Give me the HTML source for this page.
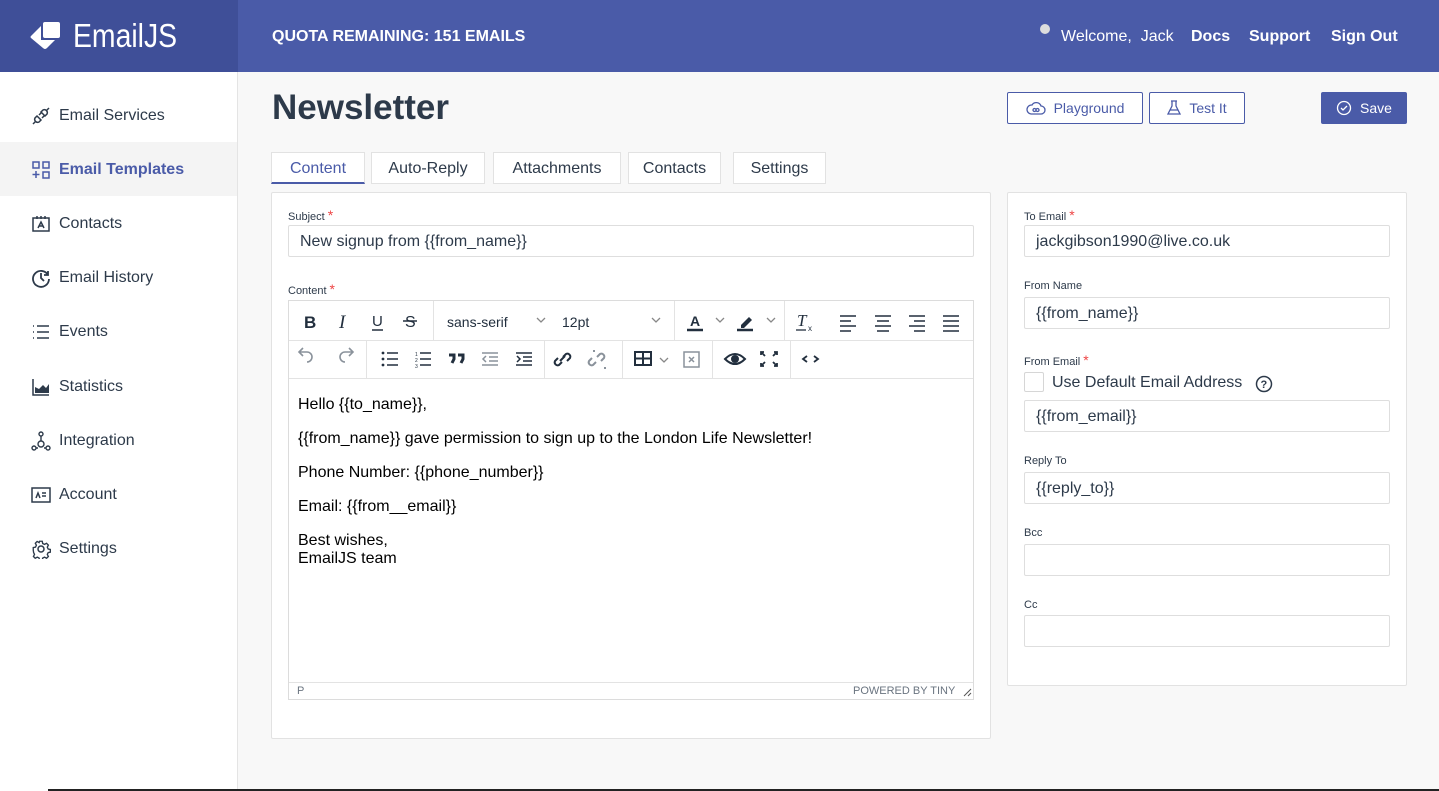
<!DOCTYPE html>
<html><head><meta charset="utf-8"><style>
*{box-sizing:border-box;margin:0;padding:0}
body{width:1439px;height:791px;overflow:hidden;background:#f8f8f8;font-family:"Liberation Sans",sans-serif;color:#2d3a4a;position:relative}
.a{position:absolute}
.hdr{left:0;top:0;width:1439px;height:72px;background:#4a5ba8}
.logo{left:0;top:0;width:238px;height:72px;background:#3f4f98}
.side{left:0;top:72px;width:238px;height:719px;background:#fff;border-right:1px solid #e4e4e4}
.ni{left:0;width:237px;height:54px;display:flex;align-items:center;padding-left:31px;padding-top:2px;font-size:16px;color:#2d3a4a}
.ni svg{width:20px;height:20px;margin-right:8px}
.btn{height:32px;border:1px solid #4a5ba8;border-radius:2px;background:#fff;color:#4a5ba8;font-size:14px;display:flex;align-items:center;justify-content:center;gap:8px}
.tab{top:152px;height:32px;background:#fff;border:1px solid #e2e2e2;font-size:16px;display:flex;align-items:center;justify-content:center;color:#2d3a4a;padding-top:2px}
.card{background:#fff;border:1px solid #e2e2e2;border-radius:2px}
.lbl{font-size:11px;color:#2d3a4a}
.lbl b{color:#e44;font-weight:normal;font-size:14px;margin-left:3px}
.inp{height:32px;border:1px solid #dedede;border-radius:2px;font-size:16px;padding-left:11px;padding-top:2px;display:flex;align-items:center;color:#2d3a4a;background:#fff}
.ed p{font-family:"Liberation Sans",Arial,sans-serif;font-size:16px;color:#000;position:absolute;left:9px}
.sep{position:absolute;top:0;width:1px;background:#e3e3e3}
</style></head><body>
<div class="a hdr"></div>
<div class="a logo"></div>
<svg class="a" style="left:30px;top:20px" width="32" height="32" viewBox="0 0 32 32"><rect x="13" y="2" width="17" height="16" rx="2" fill="#fff"/><path d="M1 16L11 6h0v14h14l-8 8q-2 2-4 0L1 18q-1-1 0-2z" fill="#fff"/></svg>
<div class="a" style="left:73px;top:17px;font-size:33px;color:#fff;transform:scaleX(0.86);transform-origin:left">EmailJS</div>
<div class="a" style="left:272px;top:28px;font-size:16px;font-weight:bold;color:#fff">QUOTA REMAINING: 151 EMAILS</div>
<div class="a" style="left:1040px;top:24px;width:10px;height:10px;border-radius:50%;background:#ddd"></div>
<div class="a" style="left:1061px;top:28px;font-size:16px;color:#fff">Welcome,&nbsp; Jack</div>
<div class="a" style="left:1191px;top:28px;font-size:16px;color:#fff;font-weight:bold">Docs</div>
<div class="a" style="left:1249px;top:28px;font-size:16px;color:#fff;font-weight:bold">Support</div>
<div class="a" style="left:1331px;top:28px;font-size:16px;color:#fff;font-weight:bold">Sign Out</div>

<div class="a side"></div>
<div class="a ni" style="top:88px"><svg viewBox="0 0 20 20" fill="none" stroke="#2d3a4a" stroke-width="1.5"><path d="M2 18l3-3M18 2l-3 3M6 10l4 4-2 2a3 3 0 01-4-4zM10 6l4 4 2-2a3 3 0 00-4-4zM8 9l2-2M11 12l2-2"/></svg>Email Services</div>
<div class="a ni" style="top:142px;background:#f4f4f4;color:#4a5ba8;font-weight:bold"><svg viewBox="0 0 20 20" fill="none" stroke="#4a5ba8" stroke-width="1.5"><rect x="2" y="2" width="6" height="6"/><rect x="12" y="2" width="6" height="6"/><rect x="12" y="12" width="6" height="6"/><path d="M5 11v7M1.5 14.5h7"/></svg>Email Templates</div>
<div class="a ni" style="top:196px"><svg viewBox="0 0 20 20" fill="none" stroke="#2d3a4a" stroke-width="1.5"><rect x="2" y="4" width="16" height="13"/><path d="M6 2v3M10 2v3M14 2v3M7 14l3-6 3 6M8 12h4"/></svg>Contacts</div>
<div class="a ni" style="top:250px"><svg viewBox="0 0 20 20" fill="none" stroke="#2d3a4a" stroke-width="1.8"><path d="M17 7A8 8 0 1 0 18 11M17 3v4h-4M10 5v5l3 3"/></svg>Email History</div>
<div class="a ni" style="top:304px"><svg viewBox="0 0 20 20" fill="none" stroke="#2d3a4a" stroke-width="1.5"><path d="M2 4h1M2 10h1M2 16h1M6 4h12M6 10h12M6 16h12"/></svg>Events</div>
<div class="a ni" style="top:359px"><svg viewBox="0 0 20 20"><path d="M2 2v16h16" fill="none" stroke="#2d3a4a" stroke-width="1.5"/><path d="M4 16v-6l4 2 4-4 3 3 3-4v9z" fill="#2d3a4a"/></svg>Statistics</div>
<div class="a ni" style="top:413px"><svg viewBox="0 0 20 20" fill="none" stroke="#2d3a4a" stroke-width="1.4"><circle cx="10" cy="3" r="2"/><circle cx="3" cy="17" r="2"/><circle cx="17" cy="17" r="2"/><circle cx="10" cy="13" r="3"/><path d="M10 5v5M5 17h2M13 17h2"/></svg>Integration</div>
<div class="a ni" style="top:467px"><svg viewBox="0 0 20 20" fill="none" stroke="#2d3a4a" stroke-width="1.5"><rect x="1" y="3" width="18" height="14"/><path d="M5 13l2-5 2 5M11 8h4M11 11h4"/></svg>Account</div>
<div class="a ni" style="top:521px"><svg viewBox="0 0 20 20" fill="none" stroke="#2d3a4a" stroke-width="1.5"><circle cx="10" cy="10" r="3"/><path d="M8.5 1.5h3l.5 2.5 2 1 2.3-1.2 2 2-1.2 2.3 1 2 2.4.5v3l-2.4.5-1 2 1.2 2.3-2 2-2.3-1.2-2 1-.5 2.4h-3l-.5-2.4-2-1-2.3 1.2-2-2 1.2-2.3-1-2L1.5 11.5v-3L4 8l1-2-1.2-2.3 2-2L8 3z" transform="scale(.9) translate(1 1)"/></svg>Settings</div>

<div class="a" style="left:272px;top:88px;font-size:35px;font-weight:bold;color:#2d3a4a">Newsletter</div>
<div class="a btn" style="left:1007px;top:92px;width:136px"><svg width="20" height="16" viewBox="0 0 20 16" fill="none" stroke="#4a5ba8" stroke-width="1.3"><path d="M5 14h10a4 4 0 000-8 5 5 0 00-9-1 4 4 0 00-1 9z"/><path d="M7 10a1.5 1.5 0 103 0 1.5 1.5 0 103 0 1.5 1.5 0 10-3 0 1.5 1.5 0 10-3 0"/></svg>Playground</div>
<div class="a btn" style="left:1149px;top:92px;width:96px"><svg width="14" height="16" viewBox="0 0 14 16" fill="none" stroke="#4a5ba8" stroke-width="1.3"><path d="M4 1h6M5 1v5L1 14h12L9 6V1M3 10h8"/></svg>Test It</div>
<div class="a btn" style="left:1321px;top:92px;width:86px;background:#4a5ba8;color:#fff"><svg width="16" height="16" viewBox="0 0 16 16" fill="none" stroke="#fff" stroke-width="1.3"><circle cx="8" cy="8" r="6.5"/><path d="M5 8l2 2 4-4"/></svg>Save</div>

<div class="a tab" style="left:271px;width:94px;color:#4a5ba8;border-bottom:2px solid #4a5ba8">Content</div>
<div class="a tab" style="left:371px;width:114px">Auto-Reply</div>
<div class="a tab" style="left:493px;width:128px">Attachments</div>
<div class="a tab" style="left:628px;width:93px">Contacts</div>
<div class="a tab" style="left:733px;width:93px">Settings</div>

<div class="a card" style="left:271px;top:192px;width:720px;height:547px"></div>
<div class="a lbl" style="left:288px;top:207px">Subject<b>*</b></div>
<div class="a inp" style="left:288px;top:225px;width:686px">New signup from {{from_name}}</div>
<div class="a lbl" style="left:288px;top:281px">Content<b>*</b></div>

<div class="a ed" style="left:288px;top:300px;width:686px;height:400px;border:1px solid #dcdcdc;background:#fff">
 <div class="a" style="left:0;top:39px;width:684px;height:1px;background:#e3e3e3"></div>
 <div class="a" style="left:0;top:77px;width:684px;height:1px;background:#e3e3e3"></div>
 <div class="sep" style="left:144px;height:39px"></div>
 <div class="sep" style="left:385px;height:39px"></div>
 <div class="sep" style="left:495px;height:39px"></div>
 <div class="sep" style="left:77px;top:40px;height:37px"></div>
 <div class="sep" style="left:255px;top:40px;height:37px"></div>
 <div class="sep" style="left:333px;top:40px;height:37px"></div>
 <div class="sep" style="left:423px;top:40px;height:37px"></div>
 <div class="sep" style="left:501px;top:40px;height:37px"></div>
 <svg class="a" style="left:0;top:0" width="684" height="78" viewBox="0 0 684 78" fill="none" stroke="#222f3e" stroke-width="2">
  <text x="15" y="27" font-family="Liberation Sans" font-weight="bold" font-size="17" fill="#222f3e" stroke="none">B</text>
  <text x="50" y="27" font-family="Liberation Serif" font-style="italic" font-size="19" fill="#222f3e" stroke="none">I</text>
  <text x="83" y="25" font-family="Liberation Sans" font-size="15" fill="#222f3e" stroke="none">U</text><path d="M83 29h11" stroke-width="1.5"/>
  <text x="116" y="26" font-family="Liberation Sans" font-size="16" fill="#222f3e" stroke="none">S</text><path d="M114 20h14" stroke-width="1.5"/>
  <text x="158" y="26" font-family="Liberation Sans" font-size="14" fill="#222f3e" stroke="none">sans-serif</text>
  <path d="M248 17l4 4 4-4M363 17l4 4 4-4M427 17l4 4 4-4M478 17l4 4 4-4M371 57l4 4 4-4" stroke="#888" stroke-width="1.3"/>
  <text x="273" y="26" font-family="Liberation Sans" font-size="14" fill="#222f3e" stroke="none">12pt</text>
  <text x="401" y="25" font-family="Liberation Sans" font-weight="bold" font-size="14" fill="#222f3e" stroke="none">A</text><path d="M398 29h16" stroke-width="2.5"/>
  <path d="M452 24l8-8 3 3-8 8h-3z" fill="#222f3e" stroke="none"/><path d="M448 29h16" stroke-width="2.5"/>
  <text x="508" y="25" font-family="Liberation Serif" font-style="italic" font-size="17" fill="#222f3e" stroke="none">T</text><path d="M507 29h10" stroke-width="1.3"/><text x="519" y="30" font-size="8" fill="#222f3e" stroke="none" font-family="Liberation Sans">x</text>
  <path d="M551 15h16M551 20h11M551 25h16M551 30h11M586 15h16M588 20h12M586 25h16M588 30h12M620 15h16M625 20h11M620 25h16M625 30h11M654 15h16M654 20h16M654 25h16M654 30h16" stroke-width="1.5"/>
  <g stroke="#8a929b" stroke-width="1.6"><path d="M14 55l-4-4 4-4M10 51h8a5 5 0 010 10M60 55l4-4-4-4M64 51h-8a5 5 0 000 10"/></g>
  <path d="M98 52h11M98 58h11M98 64h11M131 52h11M131 58h11M131 64h11" stroke-width="1.6"/>
  <circle cx="94" cy="52" r="1.4" fill="#222f3e" stroke="none"/><circle cx="94" cy="58" r="1.4" fill="#222f3e" stroke="none"/><circle cx="94" cy="64" r="1.4" fill="#222f3e" stroke="none"/>
  <text x="126" y="55" font-size="5" fill="#222f3e" stroke="none">1</text><text x="126" y="61" font-size="5" fill="#222f3e" stroke="none">2</text><text x="126" y="67" font-size="5" fill="#222f3e" stroke="none">3</text>
  <path d="M160 54h5v4l-2 4M169 54h5v4l-2 4" stroke-width="3"/>
  <g stroke="#8a929b" stroke-width="1.5"><path d="M193 52h16M200 56h9M200 60h9M193 64h16M197 55l-3 3 3 3"/></g>
  <path d="M227 52h16M234 56h9M234 60h9M227 64h16M228 55l3 3-3 3" stroke-width="1.5"/>
  <path d="M274 56l3-3a3 3 0 014 4l-3 3M273 61l-3 3a3 3 0 01-4-4l3-3M271 60l5-5" stroke-width="2"/>
  <g stroke="#8a929b" stroke-width="2"><path d="M308 56l3-3a3 3 0 014 4l-3 3M307 61l-3 3a3 3 0 01-4-4l3-3M305 51v-2M316 66v2"/></g>
  <rect x="346" y="51" width="16" height="13" stroke-width="2"/><path d="M346 57.5h16M354 51v13" stroke-width="2"/>
  <rect x="395" y="51" width="15" height="15" stroke="#8a929b" stroke-width="1.5"/><path d="M400 56l5 5M405 56l-5 5" stroke="#8a929b" stroke-width="1.5"/>
  <path d="M436 58q10-10 20 0q-10 10-20 0z" stroke-width="2"/><circle cx="446" cy="58" r="3" fill="#222f3e"/>
  <path d="M472 54v-3h3M485 51h3v3M488 62v3h-3M475 65h-3v-3M473 52l3 3M487 52l-3 3M487 64l-3-3M473 64l3-3" stroke-width="1.8"/>
  <path d="M518 55l-4 3 4 3M525 55l4 3-4 3" stroke-width="1.8"/>
 </svg>
 <p style="top:95px">Hello {{to_name}},</p>
 <p style="top:129px">{{from_name}} gave permission to sign up to the London Life Newsletter!</p>
 <p style="top:163px">Phone Number: {{phone_number}}</p>
 <p style="top:197px">Email: {{from__email}}</p>
 <p style="top:231px;line-height:18px">Best wishes,<br>EmailJS team</p>
 <div class="a" style="left:0;top:381px;width:684px;height:1px;background:#e3e3e3"></div>
 <div class="a" style="left:8px;top:384px;font-size:11px;color:#6a7480">P</div>
 <div class="a" style="left:564px;top:384px;font-size:11px;color:#6a7480">POWERED BY TINY</div>
 <svg class="a" style="left:674px;top:387px" width="9" height="9"><path d="M1 8L8 1M5 8l3-3" stroke="#555" stroke-width="1"/></svg>
</div>

<div class="a card" style="left:1007px;top:192px;width:400px;height:494px"></div>
<div class="a lbl" style="left:1024px;top:207px">To Email<b>*</b></div>
<div class="a inp" style="left:1024px;top:225px;width:366px">jackgibson1990@live.co.uk</div>
<div class="a lbl" style="left:1024px;top:280px">From Name</div>
<div class="a inp" style="left:1024px;top:297px;width:366px">{{from_name}}</div>
<div class="a lbl" style="left:1024px;top:352px">From Email<b>*</b></div>
<div class="a" style="left:1024px;top:372px;width:20px;height:20px;border:1px solid #d6d6d6;background:#fff;border-radius:2px"></div>
<div class="a" style="left:1052px;top:374px;font-size:16px">Use Default Email Address</div>
<svg class="a" style="left:1255px;top:375px" width="18" height="18" viewBox="0 0 18 18"><circle cx="9" cy="9" r="7.5" fill="none" stroke="#2d3a4a" stroke-width="1.5"/><text x="5.5" y="13" font-size="11" font-weight="bold" fill="#2d3a4a" font-family="Liberation Sans">?</text></svg>
<div class="a inp" style="left:1024px;top:400px;width:366px">{{from_email}}</div>
<div class="a lbl" style="left:1024px;top:455px">Reply To</div>
<div class="a inp" style="left:1024px;top:472px;width:366px">{{reply_to}}</div>
<div class="a lbl" style="left:1024px;top:527px">Bcc</div>
<div class="a inp" style="left:1024px;top:544px;width:366px"></div>
<div class="a lbl" style="left:1024px;top:599px">Cc</div>
<div class="a inp" style="left:1024px;top:615px;width:366px"></div>
<div class="a" style="left:48px;top:789px;width:1391px;height:2px;background:#222"></div>
</body></html>
